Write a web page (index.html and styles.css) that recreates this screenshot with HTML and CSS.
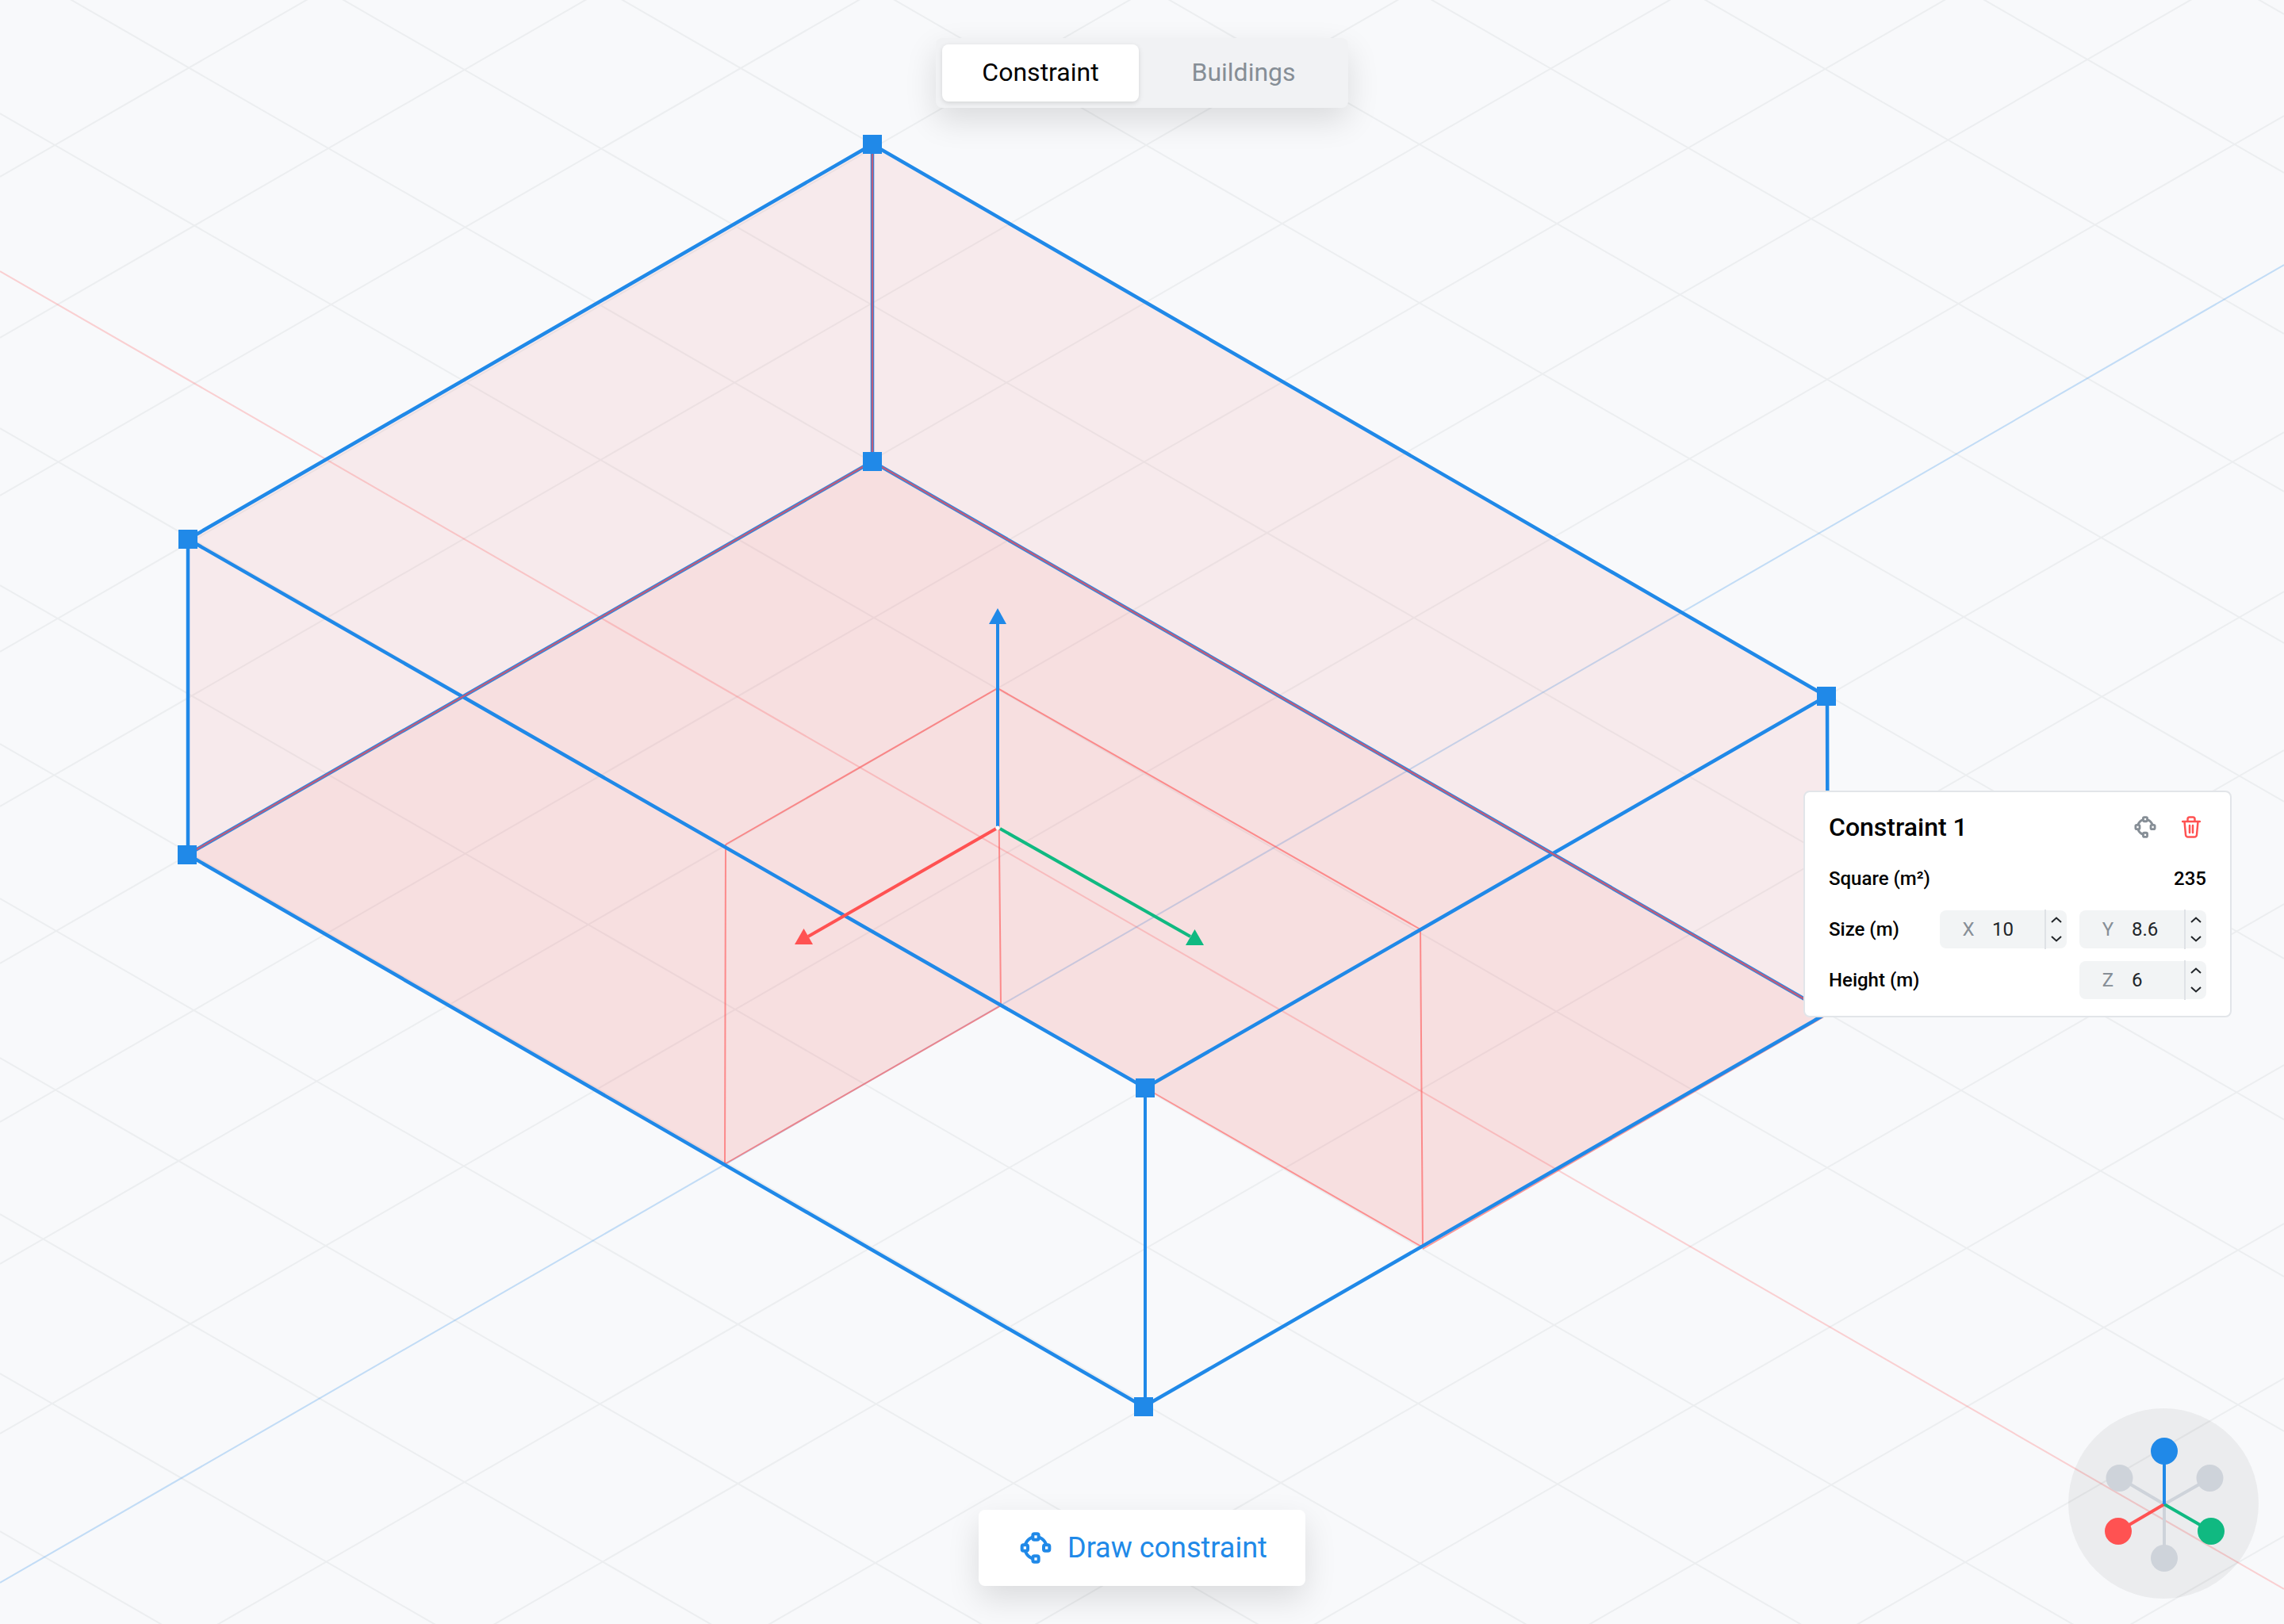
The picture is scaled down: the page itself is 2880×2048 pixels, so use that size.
FILE: index.html
```html
<!DOCTYPE html>
<html lang="en">
<head>
    <meta charset="UTF-8">
    <title>Constraint editor</title>
    <link rel="stylesheet" href="styles.css">
</head>
<body>
    <div class="stage">
        <svg class="scene" width="2880" height="2048" viewBox="0 0 2880 2048">
            <!-- floor grid -->
            <path class="grid" d="M0 -1644l2880 1662M0 -1444l2880 1662M0 -1241l2880 1662M0 -1042l2880 1662M0 -851l2880 1662M0 -651l2880 1662M0 -453l2880 1662M0 -250l2880 1662M0 -52l2880 1662M0 143l2880 1662M0 540l2880 1662M0 738l2880 1662M0 938l2880 1662M0 1133l2880 1662M0 1334l2880 1662M0 1531l2880 1662M0 1732l2880 1662M0 1931l2880 1662"/>
            <path class="grid" d="M0 223l2880 -1662M0 426l2880 -1662M0 625l2880 -1662M0 822l2880 -1662M0 1017l2880 -1662M0 1215l2880 -1662M0 1415l2880 -1662M0 1594l2880 -1662M0 1808l2880 -1662M0 2207l2880 -1662M0 2408l2880 -1662M0 2608l2880 -1662M0 2802l2880 -1662M0 3005l2880 -1662M0 3205l2880 -1662M0 3400l2880 -1662M0 3599l2880 -1662"/>
            <path class="axis-x" d="M0 342l2880 1662"/>
            <path class="axis-y" d="M0 1996l2880 -1662"/>

            <!-- volume -->
            <polygon class="wall" points="1100,182 237,680 236,1078 1100,582 2305,1277 2303,878"/>
            <polygon class="floor" points="236,1078 1100,582 2305,1277 1794,1573 1264,1267 914,1468"/>

            <!-- cut out -->
            <path class="cut" d="M915 1065L1258 868L1791 1172M914 1468L1264 1267M1444 1372L1794 1573M1794 1575L2305 1279"/>
            <path class="cut-thin" d="M915 1065L914 1468M1258 868L1262 1267M1791 1172L1794 1573"/>

            <!-- edges -->
            <path class="edge" d="M1100 182L237 680L1444 1372L2303 878ZM237 680V1078L1442 1774L2305 1277L2304 878M236 1078L1100 582L2305 1277M1100 182V582"/>
            <path class="edge-thin" d="M1444 1372V1774"/>
            <path class="edge-back" d="M1100 182V582M236 1078L1100 582L2305 1277"/>

            <!-- handles -->
            <g class="handle">
                <rect x="1088" y="170" width="24" height="24"/>
                <rect x="225" y="668" width="24" height="24"/>
                <rect x="1088" y="570" width="24" height="24"/>
                <rect x="224" y="1066" width="24" height="24"/>
                <rect x="2291" y="866" width="24" height="24"/>
                <rect x="1432" y="1360" width="24" height="24"/>
                <rect x="1430" y="1762" width="24" height="24"/>
            </g>

            <!-- move gizmo -->
            <path class="arrow-z" d="M1258 786V1042"/>
            <polygon class="fill-z" points="1258,767 1269,787 1247,787"/>
            <path class="arrow-x" d="M1019 1181L1256 1045"/>
            <polygon class="fill-x" points="1013.5,1171 1025,1191 1002,1191"/>
            <path class="arrow-y" d="M1501 1181L1261 1045"/>
            <polygon class="fill-y" points="1506.5,1172 1518,1192 1495,1192"/>
            <circle class="origin" cx="1258" cy="1044" r="2.5"/>
        </svg>

        <div class="tabs">
            <div class="tab tab-active">Constraint</div>
            <div class="tab">Buildings</div>
        </div>

        <div class="panel">
            <div class="panel-head">
                <div class="panel-title">Constraint 1</div>
                <div class="panel-icons">
                    <svg class="icon-nodes icon-grey" width="28" height="28" viewBox="0 0 24 24">
                        <path d="M12 3.6A8.400 8.400 0 0 0 3.800 12M12 3.600A8.400 8.400 0 0 1 20.200 12M3.800 12A8.400 8.400 0 0 0 12 20.400"/>
                        <rect x="9.800" y="1.400" width="4.400" height="4.400" rx="1.200"/>
                        <rect x="1.600" y="9.800" width="4.400" height="4.400" rx="1.200"/>
                        <rect x="18" y="9.800" width="4.400" height="4.400" rx="1.200"/>
                        <rect x="9.800" y="18.200" width="4.400" height="4.400" rx="1.200"/>
                    </svg>
                    <svg class="icon-trash" width="24" height="28" viewBox="0 0 24 28">
                        <path d="M1 7H23M7.500 7V4A2.500 2.500 0 0 1 10 1.500H14A2.500 2.500 0 0 1 16.500 4V7M3.500 7L5 23.500A3 3 0 0 0 8 26.500H16A3 3 0 0 0 19 23.500L20.500 7M10 12V21M14 12V21"/>
                    </svg>
                </div>
            </div>
            <div class="row">
                <div class="row-label">Square (m²)</div>
                <div class="row-value">235</div>
            </div>
            <div class="row">
                <div class="row-label">Size (m)</div>
                <div class="fields">
                    <div class="field">
                        <span class="field-axis">X</span>
                        <span class="field-value">10</span>
                        <div class="stepper">
                            <svg width="14" height="8" viewBox="0 0 14 8"><path d="M1 7L7 1.500L13 7"/></svg>
                            <svg width="14" height="8" viewBox="0 0 14 8"><path d="M1 1L7 6.500L13 1"/></svg>
                        </div>
                    </div>
                    <div class="field">
                        <span class="field-axis">Y</span>
                        <span class="field-value">8.6</span>
                        <div class="stepper">
                            <svg width="14" height="8" viewBox="0 0 14 8"><path d="M1 7L7 1.500L13 7"/></svg>
                            <svg width="14" height="8" viewBox="0 0 14 8"><path d="M1 1L7 6.500L13 1"/></svg>
                        </div>
                    </div>
                </div>
            </div>
            <div class="row">
                <div class="row-label">Height (m)</div>
                <div class="fields">
                    <div class="field">
                        <span class="field-axis">Z</span>
                        <span class="field-value">6</span>
                        <div class="stepper">
                            <svg width="14" height="8" viewBox="0 0 14 8"><path d="M1 7L7 1.500L13 7"/></svg>
                            <svg width="14" height="8" viewBox="0 0 14 8"><path d="M1 1L7 6.500L13 1"/></svg>
                        </div>
                    </div>
                </div>
            </div>
        </div>

        <div class="draw-button">
            <svg class="icon-nodes icon-blue" width="40" height="40" viewBox="0 0 24 24">
                <path d="M12 3.600A8.400 8.400 0 0 0 3.800 12M12 3.600A8.400 8.400 0 0 1 20.200 12M3.800 12A8.400 8.400 0 0 0 12 20.400"/>
                <rect x="9.800" y="1.400" width="4.400" height="4.400" rx="1.200"/>
                <rect x="1.600" y="9.800" width="4.400" height="4.400" rx="1.200"/>
                <rect x="18" y="9.800" width="4.400" height="4.400" rx="1.200"/>
                <rect x="9.800" y="18.200" width="4.400" height="4.400" rx="1.200"/>
            </svg>
            <span>Draw constraint</span>
        </div>

        <svg class="view-cube" width="240" height="240" viewBox="0 0 240 240">
            <circle class="view-bg" cx="120" cy="120" r="120"/>
            <path class="view-line" d="M121 121L65 88M121 121L179 88M121 121V189"/>
            <path class="view-red" d="M121 121L63 155"/>
            <path class="view-green" d="M121 121L180 155"/>
            <path class="view-blue" d="M121 121V54"/>
            <circle class="view-dot" cx="64.500" cy="88" r="17"/>
            <circle class="view-dot" cx="178.500" cy="88" r="17"/>
            <circle class="view-dot" cx="121" cy="189" r="17"/>
            <circle class="dot-red" cx="63" cy="155" r="17"/>
            <circle class="dot-green" cx="180" cy="155" r="17"/>
            <circle class="dot-blue" cx="121" cy="54" r="17"/>
        </svg>
    </div>
</body>
</html>
```

FILE: styles.css
```css
* {
    box-sizing: border-box;
}

body {
    margin: 0;
    background-color: #f8f9fb;
    font-family: Roboto, "Liberation Sans", sans-serif;
}

.stage {
    position: relative;
    width: 2880px;
    height: 2048px;
    overflow: hidden;
}

.scene {
    display: block;
}

.scene path {
    fill: none;
}

.scene .grid {
    stroke: #eceef0;
    stroke-width: 2;
}

.scene .axis-x {
    stroke: #ff5252;
    stroke-width: 2;
    opacity: 0.25;
}

.scene .axis-y {
    stroke: #2089e8;
    stroke-width: 2;
    opacity: 0.25;
}

.wall {
    fill: #f45054;
    fill-opacity: 0.085;
}

.floor {
    fill: #f45054;
    fill-opacity: 0.155;
}

.scene .cut {
    stroke: #ff5252;
    stroke-width: 2;
    opacity: 0.6;
}

.scene .cut-thin {
    stroke: #ff5252;
    stroke-width: 2;
    opacity: 0.6;
}

.scene .edge {
    stroke: #2089e8;
    stroke-width: 4.5;
}

.scene .edge-thin {
    stroke: #2089e8;
    stroke-width: 4;
}

.scene .edge-back {
    stroke: #d8566a;
    stroke-width: 2.5;
    opacity: 0.85;
}

.handle rect {
    fill: #2089e8;
}

.scene .arrow-z {
    stroke: #2089e8;
    stroke-width: 4;
}

.fill-z {
    fill: #2089e8;
}

.scene .arrow-x {
    stroke: #ff5252;
    stroke-width: 4;
}

.fill-x {
    fill: #ff5252;
}

.scene .arrow-y {
    stroke: #10b981;
    stroke-width: 4;
}

.fill-y {
    fill: #10b981;
}

.origin {
    fill: #ffffff;
}

.tabs {
    position: absolute;
    top: 48px;
    left: 1180px;
    display: flex;
    gap: 8px;
    width: 520px;
    height: 88px;
    padding: 8px;
    background-color: #f1f2f4;
    border-radius: 8px;
    box-shadow: 0 16px 40px rgba(0, 0, 0, 0.12);
}

.tab {
    display: flex;
    align-items: center;
    justify-content: center;
    width: 248px;
    padding-bottom: 2px;
    font-size: 32px;
    color: #868e96;
}

.tab-active {
    background-color: #ffffff;
    border-radius: 8px;
    color: #000000;
    box-shadow: 0 2px 6px rgba(0, 0, 0, 0.12);
}

.panel {
    position: absolute;
    top: 997px;
    left: 2274px;
    width: 540px;
    height: 286px;
    padding: 21px 30px 0 30px;
    background-color: #ffffff;
    border: 2px solid #e2e5e9;
    border-radius: 8px;
}

.panel-head {
    display: flex;
    align-items: center;
    justify-content: space-between;
    height: 46px;
    margin-bottom: 18px;
}

.panel-title {
    font-size: 32px;
    font-weight: 500;
    color: #000000;
}

.panel-icons {
    display: flex;
    align-items: center;
    gap: 32px;
    padding-right: 7px;
}

.icon-nodes path,
.icon-nodes rect {
    stroke-width: 2.4;
}

.icon-nodes path {
    fill: none;
}

.icon-nodes rect {
    fill: #ffffff;
}

.icon-grey path,
.icon-grey rect {
    stroke: #868e96;
}

.icon-blue path,
.icon-blue rect {
    stroke: #2089e8;
}

.icon-trash path {
    fill: none;
    stroke: #ff5252;
    stroke-width: 2.5;
    stroke-linecap: round;
    stroke-linejoin: round;
}

.row {
    display: flex;
    align-items: center;
    justify-content: space-between;
    height: 48px;
    margin-bottom: 16px;
    font-size: 24px;
    font-weight: 500;
    color: #000000;
}

.fields {
    display: flex;
    gap: 16px;
}

.field {
    display: flex;
    align-items: center;
    position: relative;
    width: 160px;
    height: 48px;
    padding-left: 24px;
    background-color: #f2f4f5;
    border-radius: 8px;
    font-weight: 400;
}

.field-axis {
    width: 24px;
    margin-right: 18px;
    text-align: center;
    color: #868e96;
}

.field-value {
    color: #212529;
}

.stepper {
    position: absolute;
    top: -1px;
    right: 0;
    bottom: -1px;
    display: flex;
    flex-direction: column;
    align-items: center;
    justify-content: center;
    gap: 16px;
    width: 28px;
    border-left: 2px solid #dfe2e6;
}

.stepper svg {
    display: block;
}

.stepper path {
    fill: none;
    stroke: #212529;
    stroke-width: 2;
}

.draw-button {
    position: absolute;
    top: 1904px;
    left: 1234px;
    display: flex;
    align-items: center;
    gap: 20px;
    width: 412px;
    height: 96px;
    padding-left: 52px;
    background-color: #ffffff;
    border-radius: 8px;
    font-size: 36px;
    color: #2089e8;
    box-shadow: 0 16px 40px rgba(0, 0, 0, 0.12);
}

.view-cube {
    position: absolute;
    top: 1776px;
    left: 2608px;
}

.view-bg {
    fill: rgba(0, 0, 0, 0.05);
}

.view-cube path {
    fill: none;
    stroke-width: 4;
}

.view-cube .view-line {
    stroke: #ced3da;
}

.view-cube .view-red {
    stroke: #ff5252;
}

.view-cube .view-green {
    stroke: #10b981;
}

.view-cube .view-blue {
    stroke: #2089e8;
}

.view-dot {
    fill: #ced3da;
}

.dot-red {
    fill: #ff5252;
}

.dot-green {
    fill: #10b981;
}

.dot-blue {
    fill: #2089e8;
}
```
